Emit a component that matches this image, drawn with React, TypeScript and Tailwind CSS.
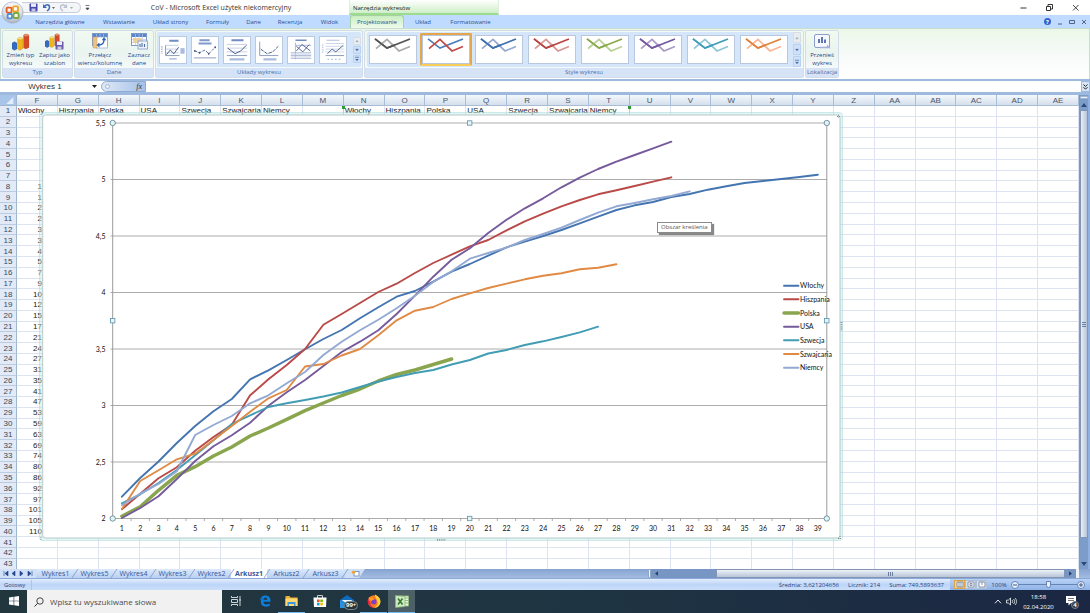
import React from "react";

const UI = "font-['Open_Sans','Noto_Sans',sans-serif]";
const CELL = "font-['Liberation_Sans',Arial,sans-serif]";

/* ---------- data ---------- */

const columns = [
  "F", "G", "H", "I", "J", "K", "L", "M", "N", "O", "P", "Q", "R", "S", "T", "U", "V", "W", "X", "Y", "Z",
  "AA", "AB", "AC", "AD", "AE",
];

const headings: Record<string, string> = {
  F: "Włochy", G: "Hiszpania", H: "Polska", I: "USA", J: "Szwecja", K: "Szwajcaria", L: "Niemcy",
  N: "Włochy", O: "Hiszpania", P: "Polska", Q: "USA", R: "Szwecja", S: "Szwajcaria", T: "Niemcy",
};

const firstColumn = [
  "", "", "", "", "", "", "1", "1", "2", "2", "3", "3", "4", "5", "7", "9", "10", "12", "15", "17", "21", "24",
  "27", "31", "35", "41", "47", "53", "59", "63", "69", "74", "80", "86", "92", "97", "101", "105", "110", "", "", "",
];

type Series = { name: string; color: string; width: number; legendY: number; ys: number[] };

const series: Series[] = [
  { name: "Polska", color: "#89a54e", width: 3.5, legendY: 313, ys: [516.3, 506.7, 490.3, 475.3, 466.7, 456, 447, 436, 428, 419.3, 410.7, 403, 395.5, 389, 381, 374.5, 370, 364.5, 359] },
  { name: "Włochy", color: "#4475b0", width: 1.9, legendY: 285.7, ys: [496.7, 478, 461.5, 443, 426, 411.3, 399, 379.3, 370.3, 360, 349.3, 339, 330, 318.3, 307.3, 296.7, 291, 281.7, 271.7, 264, 255.7, 247.3, 241.7, 236, 230, 223.3, 216.7, 210, 205.3, 202, 197, 194, 189.7, 186.3, 183, 181, 179, 177, 174.7] },
  { name: "Hiszpania", color: "#b94a48", width: 1.9, legendY: 299.3, ys: [509.3, 493.7, 478.3, 467.3, 450.7, 437, 424.7, 395.3, 379.3, 365, 349, 324.7, 314, 303, 292, 283.7, 273, 263, 254.7, 246.3, 240, 230.3, 221.3, 213.7, 206.3, 200, 194.3, 190.3, 186, 181.7, 177.3] },
  { name: "USA", color: "#765a9c", width: 1.9, legendY: 326.7, ys: [518, 508, 496.3, 479, 461, 446.3, 435.3, 422.7, 405.7, 392.3, 380, 366, 352, 341.7, 330.3, 314, 295.7, 276.7, 259.7, 248.3, 233, 219.7, 208.3, 198.3, 187.3, 177.7, 169, 161.7, 155, 148.3, 141.7] },
  { name: "Szwecja", color: "#429db4", width: 1.9, legendY: 340.3, ys: [503.3, 494.3, 483, 470, 455.3, 440.3, 424, 415.3, 407, 403.3, 400, 396.5, 392.5, 387, 381.5, 377, 373, 370, 364.5, 360, 353.5, 350, 345, 341.3, 337, 332.3, 326.7] },
  { name: "Szwajcaria", color: "#e08a44", width: 1.9, legendY: 354, ys: [509, 481, 470.3, 459.3, 453.7, 440, 426, 411.7, 398.3, 390, 366.5, 364, 355.5, 349, 335.3, 320.3, 310.7, 307, 299, 293.3, 288, 283.7, 279.3, 275.7, 273.3, 269.3, 267.7, 264.3] },
  { name: "Niemcy", color: "#93a9d3", width: 1.9, legendY: 367.7, ys: [505, 493.7, 484, 471.3, 435, 425, 416, 403.3, 395.3, 383.3, 372, 355, 341.7, 330.3, 319.7, 308.3, 295.7, 282, 271.3, 258.7, 253, 247.7, 240, 234, 227.7, 220, 212.7, 206.3, 203, 199.3, 196, 191.3] },
];

const axis = ["5,5", "5", "4,5", "4", "3,5", "3", "2,5", "2"];

const tabs = [
  { label: "Narzędzia główne", cls: "w-[68px]" },
  { label: "Wstawianie", cls: "w-[50px]" },
  { label: "Układ strony", cls: "w-[53px]" },
  { label: "Formuły", cls: "w-[41px]" },
  { label: "Dane", cls: "w-[31px]" },
  { label: "Recenzja", cls: "w-[42px]" },
  { label: "Widok", cls: "w-[37px]" },
];

const styleSwatches = [
  ["#555555", "#aaaaaa"],
  ["#4a7ebb", "#c34b47"],
  ["#3f6fb0", "#93a9d0"],
  ["#b94643", "#d99694"],
  ["#8aab4a", "#b7cf92"],
  ["#7459a0", "#ab9ac4"],
  ["#3e9db8", "#8fc6d6"],
  ["#e0813a", "#f9b590"],
];

/* ---------- title bar and tabs ---------- */

function OfficeButton() {
  return (
    <button aria-label="Office" className="absolute left-[1px] top-[1px] z-10 size-[23px]">
      <svg viewBox="0 0 23 23" className="size-full">
        <defs>
          <radialGradient id="orb" cx="50%" cy="30%" r="70%">
            <stop offset="0" stopColor="#ffffff" />
            <stop offset="0.6" stopColor="#dfe3ea" />
            <stop offset="1" stopColor="#a4adbd" />
          </radialGradient>
        </defs>
        <circle cx="11.5" cy="11.5" r="10.7" fill="url(#orb)" stroke="#aab4c6" strokeWidth="0.7" />
        <g fill="#fff8f0" strokeWidth="1.9">
          <rect x="5.6" y="6.6" width="5" height="5" rx="1" stroke="#e0602c" />
          <rect x="12" y="5.4" width="5" height="5" rx="1" stroke="#f0a42c" />
          <rect x="6.6" y="13" width="4.4" height="4.4" rx="1" stroke="#4b8fd8" />
          <rect x="12.6" y="12" width="5" height="5" rx="1" stroke="#79ac3c" />
        </g>
      </svg>
    </button>
  );
}

function TitleBar() {
  return (
    <div className="flex h-[15px] items-stretch bg-white">
      <div className="w-[22px]" />
      <div className="mt-[2px] flex h-[11px] w-[59px] items-center gap-[4px] rounded-r-full border border-l-0 border-[#c9ced6] bg-[#f3f5f8] pl-[7px]">
        <button aria-label="Zapisz" className="size-[9px]">
          <svg viewBox="0 0 9 9"><rect x="0.5" y="0.5" width="8" height="8" rx="0.8" fill="#4548a8" /><rect x="2" y="0.5" width="5" height="3.4" fill="#e8ecfa" /><rect x="2.5" y="5.5" width="4" height="3" fill="#c3c8ea" /></svg>
        </button>
        <button aria-label="Cofnij" className="h-[9px] w-[13px]">
          <svg viewBox="0 0 13 9"><path d="M1 1v4h4z" fill="#3f68c0" /><path d="M2 4C3.500 1 7.500 1 7.500 4.200c0 1.800-1 2.800-2.500 3.800" fill="none" stroke="#3f68c0" strokeWidth="1.500" /><path d="M10 4h3l-1.5 2z" fill="#666" /></svg>
        </button>
        <button aria-label="Ponów" className="h-[9px] w-[14px]">
          <svg viewBox="0 0 14 9"><path d="M8 1v4H4z" fill="#b9bfcc" /><path d="M7 4C5.500 1 1.500 1 1.500 4.200c0 1.800 1 2.800 2.500 3.800" fill="none" stroke="#b9bfcc" strokeWidth="1.3" /><path d="M11 4h3l-1.5 2z" fill="#aaa" /></svg>
        </button>
      </div>
      <button aria-label="Dostosuj pasek" className="flex w-[12px] items-center justify-center">
        <svg viewBox="0 0 5 6" className="h-[6px] w-[5px]"><path d="M0.5 0.5h4M1 3h3l-1.5 2z" fill="#445" stroke="#445" strokeWidth="0.7" /></svg>
      </button>
      <h1 className="flex w-[256px] items-center justify-center text-[7px] leading-[9px] whitespace-nowrap text-[#333]">
        CoV - Microsoft Excel użytek niekomercyjny
      </h1>
      <div className="flex w-[150px] items-end border-x border-b-2 border-[#dfeedd] border-b-[#9ddc8e] bg-linear-to-b from-white to-[#cfeec8] pl-[3px] text-[6px] leading-[9px] whitespace-nowrap text-[#222]">
        Narzędzia wykresów
      </div>
      <div className="ml-auto flex items-center gap-[17px] pr-[10px] text-[#333]">
        <button aria-label="Minimalizuj" className="size-[9px]"><svg viewBox="0 0 9 9"><path d="M1.500 5h6" stroke="currentColor" /></svg></button>
        <button aria-label="Przywróć" className="size-[9px]"><svg viewBox="0 0 9 9" fill="none" stroke="currentColor"><path d="M1.500 3.500h4v4h-4zM3 3V1.500h4.500V6H6" /></svg></button>
        <button aria-label="Zamknij" className="size-[9px]"><svg viewBox="0 0 9 9"><path d="M2 2l5.500 5.500M7.500 2L2 7.500" stroke="currentColor" strokeWidth="0.9" /></svg></button>
      </div>
    </div>
  );
}

function TabBar() {
  return (
    <nav className="flex h-[13px] items-stretch bg-[#bfdbff] pl-[26px] text-[6px] leading-[8px] whitespace-nowrap text-[#2a4f93]">
      {tabs.map((t) => (
        <button key={t.label} className={`${t.cls} shrink-0 text-center`}>{t.label}</button>
      ))}
      <button className="ml-[2px] w-[54px] shrink-0 rounded-t-[3px] border border-b-0 border-[#a5cfa5] bg-linear-to-b from-[#c9eec0] to-[#effaec] text-center">Projektowanie</button>
      <button className="w-[38px] shrink-0 text-center">Układ</button>
      <button className="w-[57px] shrink-0 text-center">Formatowanie</button>
      <div className="ml-auto flex items-center gap-[6px] pr-[3px] text-[#55657f]">
        <button aria-label="Pomoc" className="flex size-[7px] items-center justify-center rounded-full bg-[#3263c8] text-[6px] font-bold text-white">?</button>
        <button aria-label="Minimalizuj skoroszyt" className="size-[6px]"><svg viewBox="0 0 6 6"><path d="M1 5h4" stroke="currentColor" /></svg></button>
        <button aria-label="Przywróć skoroszyt" className="size-[6px]"><svg viewBox="0 0 6 6"><path d="M.5 1.500h5v3h-5z" fill="none" stroke="currentColor" /></svg></button>
        <button aria-label="Zamknij skoroszyt" className="size-[6px]"><svg viewBox="0 0 6 6"><path d="M1 1l4 4M5 1L1 5" stroke="currentColor" /></svg></button>
      </div>
    </nav>
  );
}

/* ---------- ribbon ---------- */

function Bars() {
  return (
    <g stroke="#0003" strokeWidth="0.4">
      <path d="M0 11l2.500-1.500L5 11v6l-2.500 1.500L0 17z" fill="#356cc0" />
      <path d="M5.500 7L8 5.500 11 7v9.500L8 18.500 5.500 17z" fill="#f0b41c" />
      <ellipse cx="8.2" cy="6.5" rx="2.7" ry="1.3" fill="#ffdf6a" />
      <path d="M11.500 3.500L14 2l3 1.500v12l-3 1.500-2.500-1z" fill="#d44a28" />
      <ellipse cx="14.2" cy="3.3" rx="2.7" ry="1.3" fill="#f38a63" />
    </g>
  );
}

function SheetIcon({ swap }: { swap?: boolean }) {
  return (
    <svg viewBox="0 0 20 19" className="h-[19px] w-[20px]">
      <rect x="2.5" y="1.5" width="15" height="12" fill="#fff" stroke="#7d99c8" />
      <path d="M3 2h14v3H3z" fill="#5b86cf" />
      <path d="M6.500 2v11M10 2v11M13.500 2v11M3 7.500h14M3 10.500h14" stroke="#b9c9e6" strokeWidth="0.7" />
      {swap ? (
        <g>
          <rect x="6.5" y="5" width="11" height="11" fill="#fff" stroke="#7d99c8" strokeWidth="0.6" />
          <rect x="3" y="5" width="4" height="11" fill="#ecc482" stroke="#c19c5d" strokeWidth="0.5" />
          <path d="M8.500 13c3.500 0 5.500-2 5.500-5" fill="none" stroke="#2f62b5" strokeWidth="1.4" />
          <path d="M6.500 13l3-2.500v5zM14 5l-2.300 3.300h4.600z" fill="#2f62b5" />
        </g>
      ) : (
        <g>
          <path d="M4 6h9v5H4z" fill="#efc98d" opacity="0.8" />
          <rect x="9" y="9" width="9.5" height="8" fill="#eef3fb" stroke="#8298c4" strokeWidth="0.8" />
          <path d="M11 15v-3M13 15v-4M15.500 15v-3" stroke="#4c70ad" strokeWidth="1.1" />
        </g>
      )}
    </svg>
  );
}

function BigButton({ icon, lines, cls }: { icon: React.ReactNode; lines: string[]; cls: string }) {
  return (
    <button className={`${cls} flex flex-col items-center pt-[1px] text-[6px] leading-[8px] whitespace-nowrap text-[#27478a]`}>
      {icon}
      {lines.map((l) => (
        <span key={l}>{l}</span>
      ))}
    </button>
  );
}

function Group({ label, cls, children }: { label: string; cls: string; children: React.ReactNode }) {
  return (
    <section className={`${cls} flex flex-col overflow-hidden rounded-[2px] border border-[#d3dde9] bg-linear-to-b from-[#f1faf0] via-[#eaf4f0] to-[#fbfdff]`}>
      <div className="flex min-h-0 flex-1 justify-center">{children}</div>
      <div className="h-[9px] bg-[#d6e2f6] text-center text-[6px] leading-[9px] whitespace-nowrap text-[#4a6ea9]">{label}</div>
    </section>
  );
}

function GalleryScroll() {
  return (
    <div className="ml-auto flex w-[8px] flex-col gap-px">
      {["M1.500 4h3l-1.500-2z", "M1.500 2h3l-1.500 2z", "M1 1h4v.3H1zM1.500 3h3l-1.500 2z"].map((d, i) => (
        <button key={d} aria-label={["W górę", "W dół", "Więcej"][i]} className={`flex flex-1 items-center justify-center rounded-[1px] border ${i === 0 ? "border-[#d8dde4] bg-[#e9edf2] text-[#a8b0bb]" : "border-[#b9d0ee] bg-[#cfe1f8] text-[#4a6ea9]"}`}>
          <svg viewBox="0 0 6 6" className="size-[6px]"><path d={d} fill="currentColor" stroke="currentColor" strokeWidth="0.3" /></svg>
        </button>
      ))}
    </div>
  );
}

const layoutArt = [
  <g key="a"><path d="M10 3h10" stroke="#6f8dc4" strokeWidth="2" /><path d="M6 8h14M6 12h14M6 16h14" stroke="#c3cee2" /><path d="M2 9v8" stroke="#9db1d8" strokeWidth="1.5" strokeDasharray="1.5 1" /><path d="M6 8v11h15" stroke="#8496b8" fill="none" /><rect x="22" y="11" width="4.5" height="6" fill="#a9bbde" /><path d="M10 22.500h8" stroke="#9db1d8" strokeWidth="1.5" /><path d="M7 18l4-5 4 4 5-7" stroke="#3d5487" fill="none" /></g>,
  <g key="b"><path d="M8 2.500h11M7 6h14" stroke="#7f9acb" strokeWidth="2" /><path d="M2 21.500h24" stroke="#8496b8" /><path d="M3 14l5 2 6-3 4 4 7-7" stroke="#4f6391" fill="none" strokeDasharray="3 1.5" /><g fill="#3d5487"><circle cx="3" cy="14" r="1" /><circle cx="8" cy="16" r="1" /><circle cx="18" cy="17" r="1" /><circle cx="25" cy="10" r="1" /></g></g>,
  <g key="c"><path d="M8 2.500h13" stroke="#6f8dc4" strokeWidth="2" /><path d="M3 7h22M3 11h22M3 15h22" stroke="#c3cee2" /><path d="M3 19h22" stroke="#8496b8" /><path d="M4 11l8 6 6-3 6-6" stroke="#3d5487" fill="none" /><path d="M6 23h16" stroke="#a9bbde" strokeWidth="2.5" /></g>,
  <g key="d"><path d="M4 4v15h20" stroke="#8496b8" fill="none" /><path d="M5 12l7 5 6-2 6-6" stroke="#3d5487" fill="none" strokeDasharray="4 1" /><path d="M8 23h14" stroke="#a9bbde" strokeWidth="2.5" /></g>,
  <g key="e"><path d="M8 2.500h12" stroke="#6f8dc4" strokeWidth="1.5" /><path d="M8 5v18M3 16h22M3 19h22M3 22h22M8 8h17" stroke="#a9b7d3" /><path d="M9 14l6-7 9 7M9 9l7 6 7-8" stroke="#4f6391" fill="none" /><path d="M3 17.500h22M3 20.500h22" stroke="#cbd5e8" /></g>,
  <g key="f"><path d="M7 2.500h14" stroke="#a9bbde" /><path d="M6 6h20M6 9h20M6 12h20M6 15h20" stroke="#cbd5e8" /><path d="M3 7v10" stroke="#9db1d8" strokeDasharray="1.5 1" /><path d="M6 19h20" stroke="#8496b8" /><path d="M8 17l5-5 4 3 8-7" stroke="#4f6391" fill="none" /><path d="M8 23h16" stroke="#9db1d8" strokeDasharray="2 2" /></g>,
];

function Ribbon() {
  return (
    <div className="flex h-[51px] items-stretch gap-px border-x border-t border-[#c8dcd0] bg-linear-to-b from-[#ebf8e8] via-[#f6faf9] to-white p-[1px]">
      <Group label="Typ" cls="w-[71px]">
        <BigButton cls="w-[34px]" lines={["Zmień typ", "wykresu"]} icon={<svg viewBox="0 0 18 19" className="h-[19px] w-[18px]"><Bars /></svg>} />
        <BigButton cls="w-[34px]" lines={["Zapisz jako", "szablon"]} icon={<svg viewBox="0 0 20 19" className="h-[19px] w-[20px]"><g transform="scale(.85)"><Bars /></g><rect x="10.5" y="9.5" width="8" height="8" rx="0.8" fill="#6a5aa8" /><rect x="12" y="9.5" width="5" height="3.5" fill="#f1edfa" /><rect x="12.5" y="14.5" width="4" height="3" fill="#cfc8e6" /></svg>} />
      </Group>
      <Group label="Dane" cls="w-[80px]">
        <BigButton cls="w-[50px]" lines={["Przełącz", "wiersz/kolumnę"]} icon={<SheetIcon swap />} />
        <BigButton cls="w-[28px]" lines={["Zaznacz", "dane"]} icon={<SheetIcon />} />
      </Group>
      <Group label="Układy wykresu" cls="w-[208px]">
        <div className="my-[1px] flex w-[204px] items-center gap-[4px] rounded-[2px] bg-[#d5e6fa] pl-[2px]">
          {layoutArt.map((art, i) => (
            <button key={i} aria-label={`Układ ${i + 1}`} className="h-[28px] w-[28px] shrink-0 border border-[#b8c9e2] bg-white">
              <svg viewBox="0 0 28 26" className="size-full">{art}</svg>
            </button>
          ))}
          <GalleryScroll />
        </div>
      </Group>
      <Group label="Style wykresu" cls="w-[440px]">
        <div className="my-[1px] flex w-[434px] items-stretch gap-[1px] rounded-[2px] bg-[#d5e6fa]">
          {styleSwatches.map(([dark, light], i) => (
            <button key={dark} aria-label={`Styl ${i + 1}`} className={`my-px flex w-[52px] shrink-0 items-stretch rounded-[2px] border-2 ${i === 1 ? "border-[#e3a64a] border-b-[#f7cf58]" : "border-transparent"}`}>
              <svg viewBox="0 0 46 28" className="size-full border border-[#b9c8de] bg-white" fill="none" strokeWidth="1.7" preserveAspectRatio="none">
                <path d="M5 3l12 9.500 23-9.500" stroke={dark} />
                <path d="M6 13l11-9.500L29 15.500l11-4.500" stroke={light} />
                {i !== 1 && <path d="M5 3l12 9.500 8-3.300" stroke={dark} />}
              </svg>
            </button>
          ))}
          <GalleryScroll />
        </div>
      </Group>
      <Group label="Lokalizacja" cls="w-[34px]">
        <BigButton cls="w-[32px]" lines={["Przenieś", "wykres"]} icon={<svg viewBox="0 0 20 19" className="h-[19px] w-[20px]"><rect x="2.5" y="2.5" width="15" height="13" rx="1.5" fill="#f5f8fe" stroke="#8c9ccb" /><path d="M7 11V7M10 11V5M13 11V7.500" stroke="#4f68a8" strokeWidth="1.8" /><path d="M8 15.500h9l-2-2" fill="none" stroke="#a3b0d5" strokeWidth="1.5" /></svg>} />
      </Group>
    </div>
  );
}

function FormulaBar() {
  return (
    <div className={`flex h-[16px] items-stretch border-t-2 border-b-3 border-[#9db9de] bg-white text-[8px] text-[#333] ${CELL}`}>
      <label className="relative flex w-[101px] items-center">
        <input aria-label="Pole nazwy" defaultValue="Wykres 1" className="h-[11px] w-[90px] bg-transparent text-center outline-none" />
        <svg viewBox="0 0 5 3" className="ml-[2px] h-[3px] w-[5px]"><path d="M0 0h5L2.500 3z" fill="#222" /></svg>
      </label>
      <button aria-label="Wstaw funkcję" className="flex w-[45px] items-center justify-between rounded-l-full border border-[#8fabd3] bg-linear-to-r from-[#dfe9f7] to-[#a5c1e8] px-[3px] font-['Liberation_Serif',serif] text-[8px] leading-[9px] text-[#333] italic">
        <span className="size-[5px] rounded-full border border-[#aab8cc] bg-[#eef2f8]" />
        <span>fx</span>
      </button>
      <input aria-label="Pasek formuły" className="min-w-0 flex-1 px-1 outline-none" />
      <button aria-label="Rozwiń pasek formuły" className="flex w-[9px] items-center justify-center border border-[#9db9de] bg-[#d6e4f6]">
        <svg viewBox="0 0 5 6" className="h-[6px] w-[5px]"><path d="M.5.5l2 2 2-2M.5 3.200l2 2 2-2" fill="none" stroke="#222" /></svg>
      </button>
    </div>
  );
}

/* ---------- worksheet ---------- */

function Marker() {
  return (
    <>
      <span className="absolute top-0 -left-px h-full w-px bg-[#a9dba9]" />
      <span className="absolute top-0 -left-[2px] size-[3px] bg-[#2c9a35]" />
    </>
  );
}

function Grid() {
  return (
    <table className={`h-[475px] w-full table-fixed border-separate border-spacing-0 text-[8px] leading-[9px] text-[#222] ${CELL}`}>
      <thead>
        <tr className="h-[11px] text-[#4a5568]">
          <th className="w-[17px] border-r border-b border-[#9eb6ce] bg-[#a9c4e9] p-0">
            <svg viewBox="0 0 16 10" className="h-[9px] w-[16px]"><path d="M14 1v8H6z" fill="#e3edfa" /></svg>
          </th>
          {columns.map((c) => (
            <th key={c} scope="col" className="border-r border-b border-[#a9bdd6] bg-linear-to-b from-[#f4f8fc] to-[#d5dfec] p-0 text-center font-normal">{c}</th>
          ))}
        </tr>
      </thead>
      <tbody>
        {Array.from({ length: 43 }, (_, r) => (
          <tr key={r}>
            <th scope="row" className="border-r border-b border-[#9eb6ce] border-b-[#bccce0] bg-[#e1eaf6] p-0 text-center font-normal text-[#3c475a]">{r + 1}</th>
            {columns.map((c) => (
              <td
                key={c}
                className={`relative border-r border-b border-[#dde3f0] p-0 whitespace-nowrap ${r === 0 && (c === "N" || c === "U") ? "" : "overflow-hidden"} ${r > 0 && c === "F" ? "pr-[15px] text-right" : "pl-px"}`}
              >
                {r === 0 ? headings[c] : c === "F" ? firstColumn[r - 1] : null}
                {r === 0 && (c === "N" || c === "U") && <Marker />}
              </td>
            ))}
          </tr>
        ))}
      </tbody>
    </table>
  );
}

const catX = (i: number) => 121.9 + i * 18.315;

function Chart() {
  const square = (x: number, y: number) => <rect key={`${x}-${y}`} x={x - 2.2} y={y - 2.2} width="4.4" height="4.4" fill="#e4f5fa" stroke="#5f93ab" strokeWidth="0.8" />;
  const round = (x: number, y: number) => <circle key={`${x}-${y}`} cx={x} cy={y} r="2.7" fill="#dff4f6" stroke="#5b7f8b" strokeWidth="0.8" />;
  return (
    <figure className="absolute top-[17px] left-[39px] h-[429px] w-[804px]" aria-label="Wykres 1">
      <svg viewBox="39 112 804 429" className="size-full font-['Lato','Open_Sans',sans-serif] text-[7px]">
        <rect x="39.5" y="112.5" width="803" height="428" rx="3" fill="none" stroke="#9fd0d0" strokeOpacity="0.6" strokeWidth="0.8" />
        <rect x="41" y="114" width="800" height="425" rx="3" fill="none" stroke="#bfe8e8" strokeOpacity="0.45" strokeWidth="3" />
        <rect x="42.7" y="115" width="797.3" height="423" rx="3" fill="#fff" stroke="#a9bcbc" strokeWidth="0.8" />
        {axis.map((label, i) => (
          <g key={label}>
            <path d={`M110.500 ${123 + i * 56.5}H827`} stroke="#a3a3a3" strokeWidth="0.9" />
            <text x="105.5" y={125.5 + i * 56.5} textAnchor="end" fill="#111">{label}</text>
          </g>
        ))}
        <path d="M112.700 123V518.500M826.800 123V518.500" stroke="#9a9a9a" strokeWidth="1" />
        {Array.from({ length: 39 }, (_, i) => (
          <g key={i}>
            <path d={`M${catX(i) + 9.15} 518.500v2.500`} stroke="#8a8a8a" strokeWidth="0.7" />
            <text x={catX(i)} y="531" textAnchor="middle" fill="#111">{i + 1}</text>
          </g>
        ))}
        {series.map((s) => (
          <g key={s.name}>
            <polyline points={s.ys.map((y, i) => `${catX(i)},${y}`).join(" ")} fill="none" stroke={s.color} strokeWidth={s.width} strokeLinejoin="round" strokeLinecap="round" />
            <path d={`M784 ${s.legendY}h14.500`} stroke={s.color} strokeWidth={s.width} strokeLinecap="round" />
            <text x="800" y={s.legendY + 2.5} fill="#111">{s.name}</text>
          </g>
        ))}
        {[[112.7, 320.7], [469.7, 123], [469.7, 518.5], [826.8, 320.7]].map(([x, y]) => square(x, y))}
        {[[112.7, 123], [826.8, 123], [112.7, 518.5], [826.8, 518.5]].map(([x, y]) => round(x, y))}
        <path d="M437 539.800h9M841.500 322v9" stroke="#7f9393" strokeWidth="1.8" strokeDasharray="1 1.2" />
        <path d="M837 116.500h4M838.500 114.500v4M838 538.500h3M840 536v3M41 537v3" stroke="#7f9393" strokeWidth="1" strokeDasharray="1 1" />
      </svg>
      <div role="tooltip" className={`absolute top-[110px] left-[618px] border border-[#8a8a8a] bg-white px-[3px] text-[6px] leading-[9px] whitespace-nowrap text-[#555] shadow-[2px_2px_1px_#888] ${UI}`}>
        Obszar kreślenia
      </div>
    </figure>
  );
}

function Worksheet() {
  return (
    <main className="flex min-h-0 flex-1">
      <div className="relative min-w-0 flex-1 overflow-hidden bg-white">
        <Grid />
        <Chart />
      </div>
      <div className="flex w-[11px] flex-col border-r-2 border-l border-[#8fb0e0] border-l-[#7797c6] bg-[#7c9cc9]">
        <div className="mt-[1px] h-[3px] border border-[#9db4d4] bg-[#edf3fa]" />
        <button aria-label="Przewiń w górę" className="flex h-[11px] items-center justify-center"><svg viewBox="0 0 6 4" className="h-[4px] w-[6px]"><path d="M0 4h6L3 0z" fill="#2d4a7d" /></svg></button>
        <div className="flex h-[428px] items-center justify-center border border-[#8296b4] bg-linear-to-r from-[#e8eef6] to-[#b5c4da]"><svg viewBox="0 0 4 5" className="h-[5px] w-[4px]"><path d="M0 .5h4M0 2.500h4M0 4.500h4" stroke="#6b7e9c" /></svg></div>
        <button aria-label="Przewiń w dół" className="mt-auto flex h-[11px] items-center justify-center"><svg viewBox="0 0 6 4" className="h-[4px] w-[6px]"><path d="M0 0h6L3 4z" fill="#2d4a7d" /></svg></button>
      </div>
    </main>
  );
}

/* ---------- sheet tabs, status bar ---------- */

const sheets = ["Wykres1", "Wykres5", "Wykres4", "Wykres3", "Wykres2", "Arkusz1", "Arkusz2", "Arkusz3"];

function SheetTabs() {
  return (
    <div className="flex h-[9px] items-stretch bg-linear-to-b from-[#86a3d0] to-[#a3bce2] text-[7px] leading-[9px] text-[#34589c]">
      <div className="flex w-[36px] items-center justify-around bg-[#cfe0f7] px-[2px]">
        {["M1 0v5M5 0v5L2 2.500z", "M4 0v5L1 2.500z", "M1 0v5l3-2.500z", "M1 0v5l3-2.500zM5 0v5"].map((d, i) => (
          <button key={d} aria-label={["Pierwszy", "Poprzedni", "Następny", "Ostatni"][i]} className="h-[5px] w-[6px]">
            <svg viewBox="0 0 6 5" className="block"><path d={d} fill="#24468c" stroke="#24468c" strokeWidth="0.6" /></svg>
          </button>
        ))}
      </div>
      {sheets.map((s) => (
        <button key={s} className={`relative flex h-[9px] shrink-0 items-center justify-center ${s === "Arkusz1" ? "w-[36px] bg-white font-bold" : "w-[39px] bg-linear-to-b from-[#dce9fb] to-[#b9d0f2]"}`}>
          {s}
          <svg viewBox="0 0 8 9" className="absolute top-0 -right-[4px] z-10 h-[9px] w-[8px]"><path d="M1 9L7 0" stroke="#7c97c4" strokeWidth="0.8" /></svg>
        </button>
      ))}
      <button aria-label="Wstaw arkusz" className="flex h-[9px] w-[20px] items-center justify-center bg-[#cfdff5] [clip-path:polygon(0_0,100%_0,70%_100%,0_100%)]">
        <svg viewBox="0 0 9 7" className="h-[7px] w-[9px]"><rect x="3" y="1.5" width="5" height="4.5" fill="#fff" stroke="#6d86b5" strokeWidth="0.8" /><circle cx="2.5" cy="2.2" r="1.7" fill="#f0a53a" /></svg>
      </button>
      <div className="min-w-0 flex-1" />
      <div className="w-[3px] rounded-[1px] border border-[#90a6c8] bg-[#eef3fa]" />
      <div className="flex w-[428px] items-stretch bg-[#7796c4]">
        <button aria-label="Przewiń w lewo" className="flex w-[11px] items-center justify-center"><svg viewBox="0 0 4 6" className="h-[5px] w-[3px]"><path d="M4 0v6L0 3z" fill="#233f70" /></svg></button>
        <div className="w-[54px]" />
        <div className="flex flex-1 items-center justify-center border border-[#8296b4] bg-linear-to-b from-[#edf2f8] to-[#b8c5d8]"><svg viewBox="0 0 5 4" className="h-[4px] w-[5px]"><path d="M.5 0v4M2.500 0v4M4.500 0v4" stroke="#6b7e9c" /></svg></div>
        <button aria-label="Przewiń w prawo" className="flex w-[11px] items-center justify-center"><svg viewBox="0 0 4 6" className="h-[5px] w-[3px]"><path d="M0 0v6l4-3z" fill="#233f70" /></svg></button>
        <div className="w-[3px] bg-[#eef3fa]" />
      </div>
      <div className="w-[11px]" />
    </div>
  );
}

function StatusBar() {
  return (
    <footer className="flex h-[12px] items-center border-t border-[#8aa8d8] bg-linear-to-b from-[#e2edfc] via-[#bdd5f8] to-[#cbdffa] text-[6px] leading-[10px] whitespace-nowrap text-[#24437c]">
      <span className="flex w-[32px] items-center border-r border-[#aac4ea] pl-[4px]">Gotowy</span>
      <div className="ml-auto flex items-center gap-[9px] pr-[6px]">
        <span>Średnia: 3,621204656</span>
        <span>Licznik: 214</span>
        <span>Suma: 749,5893637</span>
      </div>
      <div className="flex h-full w-[140px] items-center bg-linear-to-b from-[#b9d2f6] to-[#8fb3e8] pl-[4px]">
        {["M1 1h6v5H1zM3 1v5M5 1v5", "M1 1h6v5H1zM3 2.500h2v2H3z", "M1 1h6v5H1zM4 1v3"].map((d, i) => (
          <button key={d} aria-label={["Normalny", "Układ strony", "Podział stron"][i]} className={`flex h-[9px] w-[11px] items-center justify-center border ${i === 0 ? "border-[#d9a347] bg-[#fbd38b]" : "border-[#aebfd8] bg-[#d8e2f0]"}`}>
            <svg viewBox="0 0 8 7" className="h-[7px] w-[8px]"><path d={d} fill="#fff" stroke="#6b7a94" strokeWidth="0.8" /></svg>
          </button>
        ))}
        <span className="w-[24px] text-center">100%</span>
        <button aria-label="Pomniejsz" className="size-[8px] rounded-full border border-[#6683b4] bg-[#e8f0fb]"><svg viewBox="0 0 6 6" className="block"><path d="M1 3h4" stroke="#3c5588" /></svg></button>
        <input
          type="range"
          aria-label="Powiększenie"
          defaultValue={50}
          className="h-[8px] w-[58px] appearance-none bg-[linear-gradient(#6683b4,#6683b4)] bg-size-[100%_1px] bg-center bg-no-repeat [&::-webkit-slider-thumb]:h-[7px] [&::-webkit-slider-thumb]:w-[5px] [&::-webkit-slider-thumb]:appearance-none [&::-webkit-slider-thumb]:rounded-b-full [&::-webkit-slider-thumb]:border [&::-webkit-slider-thumb]:border-[#6683b4] [&::-webkit-slider-thumb]:bg-[#e8f0fb]"
        />
        <button aria-label="Powiększ" className="size-[8px] rounded-full border border-[#6683b4] bg-[#e8f0fb]"><svg viewBox="0 0 6 6" className="block"><path d="M1 3h4M3 1v4" stroke="#3c5588" /></svg></button>
      </div>
    </footer>
  );
}

/* ---------- taskbar ---------- */

function TaskButton({ label, cls = "", children }: { label: string; cls?: string; children: React.ReactNode }) {
  return (
    <button aria-label={label} className={`relative flex h-full w-[27px] shrink-0 items-center justify-center border-b ${cls || "border-transparent"}`}>
      {children}
    </button>
  );
}

function Taskbar() {
  return (
    <div className="flex h-[23px] items-stretch bg-linear-to-r from-[#22363d] via-[#1f3542] to-[#1b2743] text-white">
      <TaskButton label="Start"><svg viewBox="0 0 10 10" className="size-[10px]"><path d="M0 1.500L4.600.8v4H0zM5.200.7L10 0v4.800H5.200zM0 5.300h4.600v4L0 8.600zM5.200 5.300H10V10l-4.800-.7z" fill="#fff" /></svg></TaskButton>
      <label className="flex w-[195px] items-center bg-[#f1f1f1] pl-[7px]">
        <svg viewBox="0 0 10 10" className="size-[10px]"><circle cx="6" cy="4" r="3.2" fill="none" stroke="#333" strokeWidth="0.9" /><path d="M3.700 6.300L.5 9.500" stroke="#333" /></svg>
        <input aria-label="Wyszukaj" placeholder="Wpisz tu wyszukiwane słowa" className="ml-[6px] w-[160px] bg-transparent text-[8px] outline-none placeholder:text-[#4c4c4c]" />
      </label>
      <TaskButton label="Widok zadań"><svg viewBox="0 0 10 10" className="size-[10px]" fill="none" stroke="#dfe5e8" strokeWidth="0.9"><path d="M.5 0v1.500h6V0M.5 3.500h6v3h-6zM.5 10V8.500h6V10M9 0v10M8 4h2" /></svg></TaskButton>
      <TaskButton label="Edge" cls="ml-[2px] border-transparent"><svg viewBox="0 0 12 12" className="size-[12px]"><path d="M.8 6C1.200 2.500 3.500.5 6.300.5c3.400 0 5.200 2.300 5.200 5v1.300H4.300c.2 3 3.800 3.200 6.500 1.600v2.400c-4 2-9 .7-9-4 0-1.800 1-3.500 2.800-4.400C3 3 1.600 4 .8 6zm3.600-1.200h4c0-3-3.700-2.900-4 0z" fill="#0c7fdd" /></svg></TaskButton>
      <TaskButton label="Eksplorator plików" cls="border-[#76b9ed]"><svg viewBox="0 0 13 12" className="h-[12px] w-[13px]"><path d="M.5 1h4l1 1.500h7V11H.5z" fill="#e9b13a" /><path d="M.5 3.500h12V11H.5z" fill="#ffd970" /><path d="M2.500 11V7h8v4H9V9H4v2z" fill="#3d94dd" /></svg></TaskButton>
      <TaskButton label="Sklep" cls="ml-px border-transparent"><svg viewBox="0 0 14 14" className="size-[14px]"><path d="M4.500 4V1.500h5V4" fill="none" stroke="#ddd" strokeWidth="0.9" /><path d="M.5 3.500h13L13 13H1z" fill="#fff" /><path d="M4 5.500h2.600v2.600H4z" fill="#f25022" /><path d="M7.300 5.500h2.600v2.600H7.300z" fill="#7fba00" /><path d="M4 8.800h2.600v2.600H4z" fill="#00a4ef" /><path d="M7.300 8.800h2.600v2.600H7.300z" fill="#ffb900" /></svg></TaskButton>
      <TaskButton label="Poczta">
        <svg viewBox="0 0 14 13" className="h-[13px] w-[14px]"><path d="M0 5l7-5 7 5v8H0z" fill="#0f6cbd" /><path d="M1.500 5h11L7 9z" fill="#e9f3fb" /><path d="M0 5l7 5 7-5v8H0z" fill="#2793e0" /></svg>
        <span className="absolute bottom-[2px] left-[11px] rounded-full border border-[#7a858b] bg-[#27343a] px-[1px] text-[6px] leading-[7px] font-bold">99+</span>
      </TaskButton>
      <TaskButton label="Firefox" cls="border-[#76b9ed]"><svg viewBox="0 0 14 14" className="size-[14px]"><circle cx="7" cy="7.5" r="6.2" fill="#ff7a1a" /><path d="M8 .5c3 1.500 6.200 4 5.300 8.500C12.500 12 10 14 7 13.700c3-1 4-3 3.600-5.700C10 5 8 4 8 .5z" fill="#ffd23c" /><path d="M1 5C0 9 2.500 13.700 7 13.700c-3-1.500-4-3-3.500-5z" fill="#e8204f" /><circle cx="6.8" cy="7.8" r="2.7" fill="#7a42c8" /><path d="M1.500 3.500C4 3 6 4 7.500 5.500 5.500 5.500 5 7 4 7z" fill="#ff9a2c" /></svg></TaskButton>
      <TaskButton label="Excel" cls="ml-px bg-[#4d6068] border-[#76b9ed]"><svg viewBox="0 0 14 13" className="h-[13px] w-[14px]"><path d="M4 1h9.500v10H4z" fill="#e8f4e2" stroke="#8fbf7a" strokeWidth="0.8" /><path d="M9 3h4M9 5.500h4M9 8h4" stroke="#8fbf7a" /><path d="M.5.5L10 1.500v10l-9.500 1z" fill="#cfe7c2" stroke="#7fb56d" strokeWidth="0.7" /><path d="M3 3.500l4.500 6M7.500 3.500L3 9.500" stroke="#2f7d2c" strokeWidth="1.5" /></svg></TaskButton>
      <div className="ml-auto flex items-center pr-[12px]">
        <svg viewBox="0 0 8 5" className="h-[5px] w-[8px]"><path d="M1 4.300L4 1l3 3.300" fill="none" stroke="#e6eaee" /></svg>
        <svg viewBox="0 0 11 9" className="ml-[4px] h-[9px] w-[11px]" fill="none" stroke="#dfe4ea" strokeWidth="0.9"><path d="M.5 3.200h1.800L4.500 1v7L2.300 6H.5zM6 3c.8.8.8 2.200 0 3M7.500 2c1.500 1.300 1.500 3.700 0 5M9 1c2 1.800 2 5.200 0 7" /></svg>
        <div className="mx-[4px] w-[35px] text-center text-[6px] leading-[10px]">
          <div>18:58</div>
          <div className="whitespace-nowrap">02.04.2020</div>
        </div>
        <button aria-label="Powiadomienia" className="relative ml-[5px] size-[13px]">
          <svg viewBox="0 0 13 13" className="size-full"><path d="M1 1h10v7H6l-2.500 2.500V8H1z" fill="#fff" /><path d="M3 3.500h6M3 5.500h6" stroke="#555" strokeWidth="0.8" /></svg>
          <span className="absolute -right-[1px] -bottom-[1px] flex size-[8px] items-center justify-center rounded-full border border-[#7a828f] bg-[#333a47] text-[6px] leading-[6px] font-bold">4</span>
        </button>
      </div>
    </div>
  );
}

export default function App() {
  return (
    <div className={`relative flex h-screen w-full flex-col overflow-hidden bg-white ${UI}`}>
      <header className="relative shrink-0">
        <OfficeButton />
        <TitleBar />
        <TabBar />
        <Ribbon />
        <FormulaBar />
      </header>
      <Worksheet />
      <div className="shrink-0">
        <SheetTabs />
        <StatusBar />
        <Taskbar />
      </div>
    </div>
  );
}
